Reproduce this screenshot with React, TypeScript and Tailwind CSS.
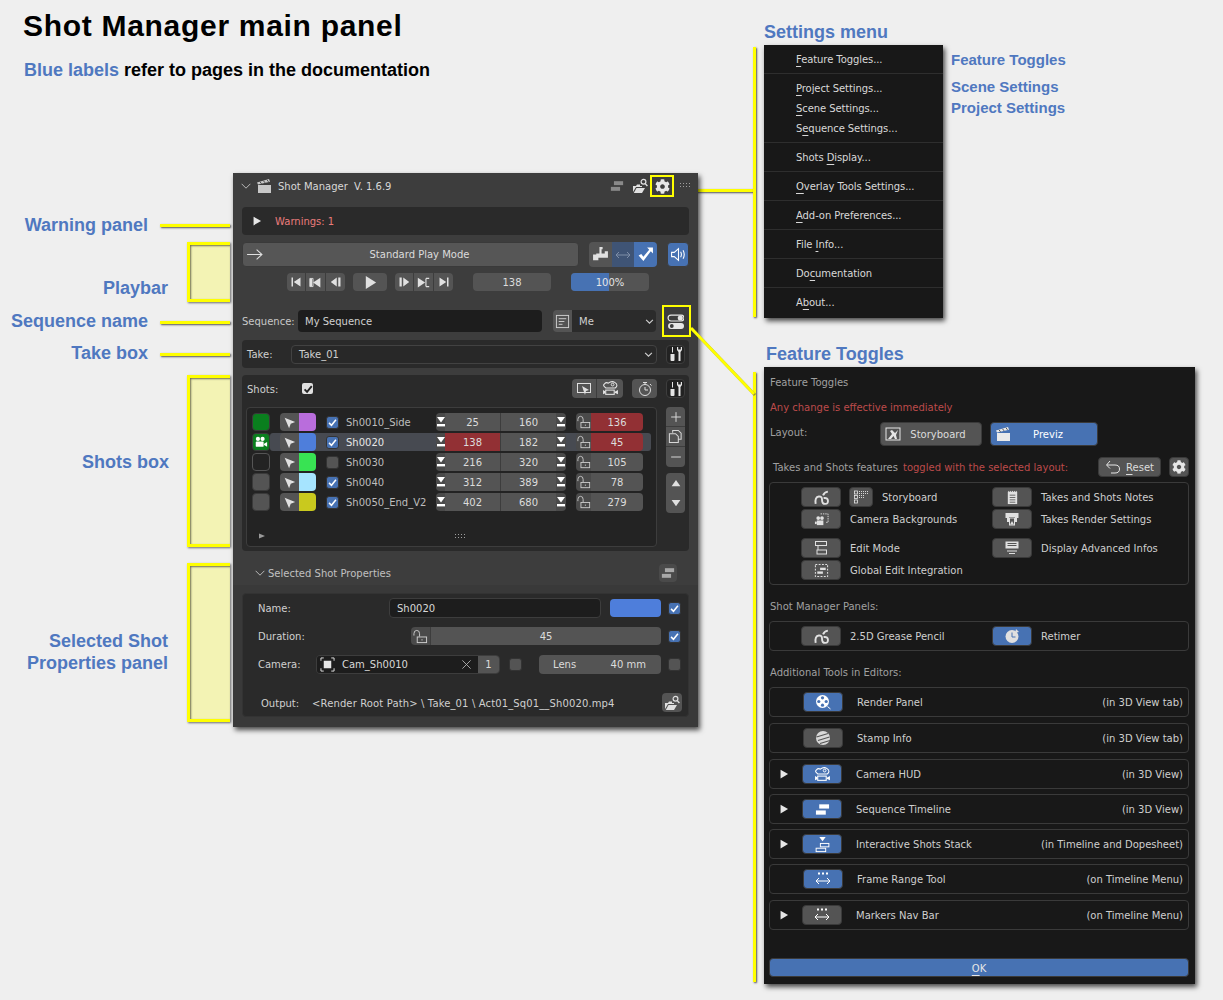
import React from "react";
import { FaCog } from "react-icons/fa";
import { twMerge } from "tailwind-merge";

type P = { className?: string; children?: React.ReactNode };
const UI = "[font-family:'DejaVu_Sans',sans-serif] text-[10px] leading-[14px]";

const T = ({ className = "", children }: P) => <span className={"relative top-[1px] " + className}>{children}</span>;

const Ico = ({ s = 16, w, h, className = "text-[#e0e0e0]", children, vb = "0 0 16 16" }: { s?: number; w?: number; h?: number; className?: string; children?: React.ReactNode; vb?: string }) => (
  <svg width={w ?? s} height={h ?? s} viewBox={vb} fill="currentColor" className={className + " shrink-0"}>
    {children}
  </svg>
);

const Chevron = () => (
  <Ico s={10} className="text-[#c0c0c0]"><path d="M1 4.5 L8 11.5 L15 4.5" fill="none" stroke="currentColor" strokeWidth="1.5" /></Ico>
);
const Caret = ({ className = "text-[#e6e6e6]" }: P) => (
  <Ico s={10} className={className}><path d="M2.5 1 L14.5 8 L2.5 15 Z" /></Ico>
);
const Drop = ({ className = "" }: P) => (
  <Ico s={9} className={"text-[#d0d0d0] " + className}><path d="M2 5 L8 11 L14 5" fill="none" stroke="currentColor" strokeWidth="2" /></Ico>
);
const Clapper = ({ s = 16, className = "text-[#c8c8c8]" }: { s?: number; className?: string }) => (
  <Ico s={s} className={className}>
    <path d="M2 7 H15 V15 H2 Z" />
    <path d="M1 4.5 L13 1 L14 3.8 L2 6.6 Z" />
    <path d="M4 3.8 L5.5 5.8 M7.5 2.8 L9 4.8 M11 1.8 L12.5 3.8" stroke="#3d3d3d" strokeWidth="0.9" />
  </Ico>
);
const Bars = ({ s = 14, className = "text-[#8a8a8a]" }: { s?: number; className?: string }) => (
  <Ico s={s} className={className}>
    <rect x="4.5" y="2.5" width="10.5" height="4.5" />
    <rect x="1" y="9" width="10.5" height="4.5" />
  </Ico>
);
const FolderSearch = ({ s = 16 }: { s?: number }) => (
  <Ico s={s}>
    <path d="M1 8 H4 L5 6.5 H8 V8 H10 V9 H4 L1 14 Z" />
    <path d="M4.5 10 H13 L10 15 H1.8 Z" />
    <circle cx="11.5" cy="3.8" r="2.4" fill="none" stroke="currentColor" strokeWidth="1.2" />
    <path d="M13.2 5.6 L15.4 8" stroke="currentColor" strokeWidth="1.4" />
  </Ico>
);
const Grip = () => (
  <svg width="12" height="6" viewBox="0 0 12 6" className="shrink-0 text-[#a0a0a0]" fill="currentColor">
    {[0, 3, 6, 9].map((x) => (
      <g key={x}>
        <rect x={x} y="0" width="1" height="1" />
        <rect x={x} y="3" width="1" height="1" />
      </g>
    ))}
  </svg>
);
const Tools = () => (
  <Ico s={16} className="text-[#e6e6e6]">
    <path d="M4 1 H5 V6.5 H4 Z" />
    <path d="M2.5 8 H6.5 V14 Q6.5 15 5.5 15 H3.5 Q2.5 15 2.5 14 Z" />
    <path d="M9 1 V4 L10.5 6 V15 H12.5 V6 L14 4 V1 L12.8 1 V3.6 H10.2 V1 Z" />
  </Ico>
);
const Tick = ({ s = 13 }: { s?: number }) => (
  <Ico s={s} className="text-white"><path d="M3 8.5 L6.5 12 L13 4" fill="none" stroke="currentColor" strokeWidth="2.2" /></Ico>
);
const Check = ({ on = true, className = "" }: { on?: boolean; className?: string }) => (
  <div className={twMerge("w-[13px] h-[13px] rounded-[3px] flex items-center justify-center shrink-0 border border-[#333]", on ? "bg-[#4772b3]" : "bg-[#545454]", className)}>
    {on && <Tick s={11} />}
  </div>
);
const Cursor = () => (
  <Ico s={13} className="text-[#e0e0e0]"><path d="M2 2 L15 7.5 L9.5 9.5 L7.5 15 Z" /></Ico>
);
const Lock = ({ s = 15 }: { s?: number }) => (
  <Ico s={s} className="text-[#cfcfcf]">
    <path d="M1 7 V5 Q1 1.5 4 1.5 Q7 1.5 7 5 V8" fill="none" stroke="currentColor" strokeWidth="1" />
    <rect x="4.5" y="8.5" width="10" height="6" fill="none" stroke="currentColor" strokeWidth="1" />
    <rect x="9" y="11" width="1.2" height="1.2" />
  </Ico>
);
const SetDown = () => (
  <Ico w={8} h={12} vb="0 0 8 12" className="text-white">
    <path d="M0 1 H8 L4 6.5 Z" />
    <rect x="0" y="8" width="8" height="2.4" />
  </Ico>
);
const CameraSolid = ({ s = 14, className = "text-white" }: { s?: number; className?: string }) => (
  <Ico s={s} className={className}>
    <circle cx="4.5" cy="4.5" r="2.4" />
    <circle cx="9.8" cy="4.5" r="2.4" />
    <rect x="2" y="7.5" width="9" height="6" rx="1" />
    <path d="M11.5 10 L15 8 V13.5 L11.5 11.5 Z" />
  </Ico>
);
const CameraHud = ({ s = 16, className = "text-[#e6e6e6]" }: { s?: number; className?: string }) => (
  <Ico s={s} className={className}>
    <path d="M2.5 6.5 Q0.5 5 2.5 3.5 Q4 1.8 6 3 Q9 0.5 12 2.2 Q15 4 13.5 6.5 L12.5 7.5 H3.5 Z" fill="none" stroke="currentColor" strokeWidth="1" />
    <circle cx="10" cy="4.3" r="1.3" fill="none" stroke="currentColor" strokeWidth="0.9" />
    <rect x="3.5" y="9.5" width="8" height="4" fill="none" stroke="currentColor" strokeWidth="1" />
    <path d="M1 9.5 L3 10.5 V12.5 L1 13.5 Z M12 11 L15 9.5 V13.5 L12 12 Z" />
  </Ico>
);
const Squiggle = () => (
  <Ico s={17}>
    <path d="M2.5 14 Q1.5 7.5 5.5 7 Q8.5 6.8 8.5 10 Q8.5 14 11.5 14 Q14.5 14 14 10.5 Q13.5 8 10 8.5 M9.5 6 Q10.5 3 14 2.5" fill="none" stroke="currentColor" strokeWidth="1.8" />
  </Ico>
);
const Gear = ({ s = 15, className = "text-[#e6e6e6]" }: { s?: number; className?: string }) => <FaCog size={s} className={className + " shrink-0"} />;

const wrap = (c: React.ReactNode) => (typeof c === "string" ? <T>{c}</T> : c);
const W = ({ className = "", children }: P) => (
  <div className={twMerge("flex items-center justify-center rounded-[4px] bg-[#545454] border border-[#3a3a3a] shrink-0 text-[#dcdcdc]", className)}>{wrap(children)}</div>
);
const Seg = ({ className = "", children }: P) => (
  <div className={twMerge("flex items-center justify-center bg-[#545454] shrink-0 text-[#dcdcdc]", className)}>{wrap(children)}</div>
);

const tri = (d: string) => <path d={d} />;
const Transport = {
  a: <Ico s={12}>{tri("M2 2 H4 V14 H2 Z M14 2 V14 L5 8 Z")}</Ico>,
  b: <Ico s={13}><path d="M1 3 H5 V13 H1 Z" fill="none" stroke="currentColor" strokeWidth="1" /><path d="M5 8 L14 2 V14 Z" /><path d="M1 3 H4 V13 H1 Z" /></Ico>,
  c: <Ico s={12}>{tri("M9 2 V14 L1 8 Z M11 2 H14 V14 H11 Z")}</Ico>,
  play: <Ico s={15}>{tri("M3 1 L14 8 L3 15 Z")}</Ico>,
  d: <Ico s={12}>{tri("M2 2 H5 V14 H2 Z M7 2 L15 8 L7 14 Z")}</Ico>,
  e: <Ico s={13}><path d="M1 2 L10 8 L1 14 Z" /><path d="M11 3 H15 M11 13 H15 M11 3 V13" fill="none" stroke="currentColor" strokeWidth="1.4" /></Ico>,
  f: <Ico s={12}>{tri("M2 2 L11 8 L2 14 Z M12 2 H14 V14 H12 Z")}</Ico>,
};

const ROWS = [
  { c: "bg-[#0a7f1e]", cam: false, sw: "bg-[#b96ddc]", on: true, name: "Sh0010_Side", a: "25", b: "160", d: "136", ra: false, rd: true },
  { c: "bg-[#0a7f1e]", cam: true, sw: "bg-[#4e7edb]", on: true, name: "Sh0020", a: "138", b: "182", d: "45", ra: true, rd: true, sel: true },
  { c: "bg-[#232323] border-[#555555]", cam: false, sw: "bg-[#38e353]", on: false, name: "Sh0030", a: "216", b: "320", d: "105", ra: false, rd: false },
  { c: "bg-[#545454]", cam: false, sw: "bg-[#a6e4ff]", on: true, name: "Sh0040", a: "312", b: "389", d: "78", ra: false, rd: false },
  { c: "bg-[#545454]", cam: false, sw: "bg-[#c9c91e]", on: true, name: "Sh0050_End_V2", a: "402", b: "680", d: "279", ra: false, rd: false },
];

const ShotRow = ({ r }: { r: (typeof ROWS)[number] }) => (
  <div className="relative flex items-center h-[18px]">
    {r.sel && <div className="absolute left-[18px] top-0 h-[18px] w-[381px] bg-[#474a51] rounded-[3px]" />}
    <W className={"relative w-[18px] h-[18px] " + r.c}>{r.cam && <CameraSolid s={14} />}</W>
    <div className="relative ml-[10px] flex w-[36px] h-[18px] rounded-[4px] overflow-hidden shrink-0">
      <Seg className="w-[19px]"><Cursor /></Seg>
      <div className={"w-[17px] " + r.sw} />
    </div>
    <Check on={r.on} className="relative ml-[10px]" />
    <div className={"relative ml-[7px] w-[90px] shrink-0 whitespace-nowrap " + (r.sel ? "text-[#e8e8e8]" : "text-[#bdbdbd]")}><T>{r.name}</T></div>
    <div className="relative flex h-[18px] w-[130px] rounded-[4px] overflow-hidden shrink-0">
      <Seg className="w-[9px] bg-[#4a4a4a]"><SetDown /></Seg>
      <Seg className={r.ra ? "w-[55px] bg-[#923034]" : "w-[55px]"}>{r.a}</Seg>
      <Seg className="w-[1px] bg-[#3d3d3d]" />
      <Seg className="w-[55px]">{r.b}</Seg>
      <Seg className="w-[10px] bg-[#4a4a4a]"><SetDown /></Seg>
    </div>
    <div className="relative ml-[10px] flex h-[18px] w-[67px] rounded-[4px] overflow-hidden shrink-0">
      <Seg className="w-[15px] bg-[#4a4a4a]"><Lock s={14} /></Seg>
      <Seg className={r.rd ? "w-[52px] bg-[#923034]" : "w-[52px]"}>{r.d}</Seg>
    </div>
  </div>
);

const MainPanel = () => (
  <div className={"absolute left-[233px] top-[173px] w-[465px] h-[554px] bg-[#3d3d3d] shadow-[2px_3px_5px_rgba(0,0,0,0.7)] text-[#d0d0d0] flex flex-col " + UI}>
    <div className="flex items-center h-[26px] pl-[8px] shrink-0">
      <Chevron />
      <div className="ml-[5px]"><Clapper /></div>
      <T className="ml-[6px] text-[#d8d8d8] whitespace-pre">Shot Manager  V. 1.6.9</T>
      <div className="ml-auto flex items-center pr-[6px]">
        <Bars />
        <div className="ml-[8px]"><FolderSearch /></div>
        <div className="ml-[6px] w-[16px] flex justify-center"><Gear s={15} /></div>
        <div className="ml-[10px]"><Grip /></div>
      </div>
    </div>

    <div className="mt-[8px] ml-[9px] w-[447px] h-[28px] rounded-[4px] bg-[#2a2a2a] flex items-center pl-[10px] shrink-0">
      <Caret />
      <T className="ml-[13px] text-[#ea7c7c]">Warnings: 1</T>
    </div>

    <div className="mt-[7px] ml-[9px] flex h-[25px] shrink-0">
      <W className="relative w-[337px] h-[25px] bg-[#565656]">
        <div className="absolute left-[3px]">
          <Ico s={17} className="text-[#e0e0e0]"><path d="M1 8 H15 M10 3.5 L15 8 L10 12.5" fill="none" stroke="currentColor" strokeWidth="1" /></Ico>
        </div>
        <span className="ml-[18px]">Standard Play Mode</span>
      </W>
      <div className="ml-[10px] flex h-[25px] w-[68px] rounded-[4px] overflow-hidden">
        <Seg className="w-[23px]">
          <Ico s={17}>
            <path d="M7 1 H10 V3 H9 V7 H12 V5 H15 V11 H6 V13.5 H1 V8 H4 V7 H7 Z" />
          </Ico>
        </Seg>
        <Seg className="w-[22px] bg-[#3f5475]">
          <Ico s={16} className="text-[#7e8ea8]"><path d="M1 8 H15 M4 5 L1 8 L4 11 M12 5 L15 8 L12 11" fill="none" stroke="currentColor" strokeWidth="1" /></Ico>
        </Seg>
        <Seg className="w-[23px] bg-[#4772b3]">
          <Ico s={17} className="text-white"><path d="M1.5 9 L6 14 L13 5 L15 7 V1.5 H9.5 L11.5 3.5 L6 10 L4 7.5 Z" /></Ico>
        </Seg>
      </div>
      <W className="ml-[10px] w-[22px] h-[25px] bg-[#4772b3] border-[#3d3d3d]">
        <Ico s={17} className="text-white">
          <path d="M1.5 6 H4 L8 2.5 V13.5 L4 10 H1.5 Z M10 5.5 Q11.5 8 10 10.5 M12.3 4 Q14.5 8 12.3 12" fill="none" stroke="currentColor" strokeWidth="1" />
        </Ico>
      </W>
    </div>

    <div className="mt-[6px] flex h-[18px] shrink-0 ml-[54px]">
      <div className="flex w-[58px] rounded-[4px] overflow-hidden">
        <Seg className="w-[19px] border-r border-[#3d3d3d]">{Transport.a}</Seg>
        <Seg className="w-[20px] border-r border-[#3d3d3d]">{Transport.b}</Seg>
        <Seg className="w-[19px]">{Transport.c}</Seg>
      </div>
      <W className="ml-[8px] w-[34px] border-0">{Transport.play}</W>
      <div className="ml-[8px] flex w-[58px] rounded-[4px] overflow-hidden">
        <Seg className="w-[19px] border-r border-[#3d3d3d]">{Transport.d}</Seg>
        <Seg className="w-[20px] border-r border-[#3d3d3d]">{Transport.e}</Seg>
        <Seg className="w-[19px]">{Transport.f}</Seg>
      </div>
      <W className="ml-[20px] w-[78px] border-0">138</W>
      <div className="relative ml-[20px] w-[78px] h-[18px] rounded-[4px] overflow-hidden bg-[#545454] flex items-center justify-center text-[#e6e6e6]">
        <div className="absolute left-0 top-0 h-full w-[38px] bg-[#4772b3]" />
        <T>100%</T>
      </div>
    </div>

    <div className="mt-[19px] ml-[9px] flex items-center h-[22px] shrink-0">
      <T className="w-[56px] text-[#c8c8c8]">Sequence:</T>
      <div className="w-[244px] h-[22px] rounded-[4px] bg-[#1d1d1d] flex items-center pl-[7px] text-[#d0d0d0]"><T>My Sequence</T></div>
      <div className="ml-[11px] flex w-[103px] h-[22px] rounded-[4px] overflow-hidden">
        <Seg className="w-[19px]">
          <Ico s={15} className="text-[#d0d0d0]"><rect x="1.5" y="1.5" width="13" height="13" fill="none" stroke="currentColor" strokeWidth="1" /><path d="M4 5 H12 M4 8 H10 M4 11 H8" stroke="currentColor" strokeWidth="1" /></Ico>
        </Seg>
        <div className="flex-1 bg-[#2b2b2b] flex items-center pl-[7px] pr-[2px] justify-between"><T>Me</T><Drop /></div>
      </div>
      <div className="ml-[7px] w-[24px] flex justify-center">
        <Ico s={17} className="text-[#e6e6e6]">
          <rect x="1" y="2" width="15" height="5.5" rx="2.75" fill="none" stroke="currentColor" strokeWidth="1.1" />
          <circle cx="12.5" cy="4.75" r="2.4" />
          <rect x="1" y="9.5" width="15" height="5.5" rx="2.75" />
          <circle cx="4.5" cy="12.25" r="1.8" fill="#3d3d3d" />
        </Ico>
      </div>
    </div>

    <div className="mt-[8px] ml-[9px] w-[447px] h-[28px] rounded-[4px] bg-[#2a2a2a] flex items-center pl-[5px] shrink-0">
      <T className="w-[44px]">Take:</T>
      <div className="w-[366px] h-[19px] rounded-[4px] bg-[#282828] border border-[#424242] flex items-center pl-[7px] pr-[3px] justify-between"><T>Take_01</T><Drop /></div>
      <div className="ml-[9px] w-[19px] h-[19px] rounded-[4px] bg-[#222] border border-[#3d3d3d] flex items-center justify-center"><Tools /></div>
    </div>

    <div className="mt-[7px] ml-[9px] w-[447px] h-[176px] rounded-[4px] bg-[#2a2a2a] flex flex-col shrink-0">
      <div className="mt-[4px] flex items-center h-[19px] pl-[5px]">
        <T className="w-[55px]">Shots:</T>
        <div className="w-[11px] h-[11px] rounded-[2px] bg-[#e0e0e0] flex items-center justify-center">
          <Ico s={10} className="text-[#222]"><path d="M2.5 8.5 L6.5 12.5 L14 3.5" fill="none" stroke="currentColor" strokeWidth="3" /></Ico>
        </div>
        <div className="ml-[259px] flex w-[51px] h-[19px] rounded-[4px] overflow-hidden">
          <Seg className="w-[25px] border-r border-[#3d3d3d]">
            <Ico s={16}><rect x="1.5" y="2.5" width="13" height="9" fill="none" stroke="currentColor" strokeWidth="1" /><path d="M6 5 L13 9 L10 10 L9 14 Z" /></Ico>
          </Seg>
          <Seg className="w-[26px]"><CameraHud s={17} /></Seg>
        </div>
        <W className="ml-[9px] w-[25px] h-[19px] border-0">
          <Ico s={16}><circle cx="8" cy="9" r="5.5" fill="none" stroke="currentColor" strokeWidth="1" /><path d="M6 1.5 H10 M8 2 V3.5 M8 6 V9 H11 M13 3 L14.5 4.5" fill="none" stroke="currentColor" strokeWidth="1" /></Ico>
        </W>
        <div className="ml-[9px] w-[19px] h-[19px] rounded-[4px] bg-[#222] border border-[#3d3d3d] flex items-center justify-center"><Tools /></div>
      </div>
      <div className="mt-[9px] ml-[4px] flex">
        <div className="w-[411px] h-[140px] rounded-[4px] bg-[#232323] border border-[#3d3d3d] flex flex-col relative shrink-0">
          <div className="pl-[5px] pt-[5px] flex flex-col gap-[2px]">
            {ROWS.map((r) => <ShotRow key={r.name} r={r} />)}
          </div>
          <div className="absolute left-[11px] bottom-[6px]"><Ico s={8} className="text-[#9a9a9a]"><path d="M2 3 L14 8 L2 13 Z" /></Ico></div>
          <div className="absolute left-[208px] bottom-[6px]"><Grip /></div>
        </div>
        <div className="ml-[9px] flex flex-col">
          <div className="w-[19px] h-[60px] rounded-[4px] overflow-hidden flex flex-col">
            <Seg className="h-[20px] border-b border-[#3d3d3d]"><Ico s={12} className="text-[#d8d8d8]"><path d="M8 1.5 V14.5 M1.5 8 H14.5" stroke="currentColor" strokeWidth="1.3" /></Ico></Seg>
            <Seg className="h-[20px] border-b border-[#3d3d3d]"><Ico s={15} className="text-[#d8d8d8]"><path d="M5 4 V1.5 H11 L14 4.5 V11 H11 M1.5 5 H8 L11 8 V14.5 H1.5 Z" fill="none" stroke="currentColor" strokeWidth="1.1" /></Ico></Seg>
            <Seg className="h-[20px]"><Ico s={12} className="text-[#d8d8d8]"><path d="M1.5 8 H14.5" stroke="currentColor" strokeWidth="1.3" /></Ico></Seg>
          </div>
          <div className="mt-[6px] w-[19px] h-[40px] rounded-[4px] overflow-hidden flex flex-col">
            <Seg className="h-[20px]"><Ico s={10} className="text-[#e0e0e0]"><path d="M8 3 L15 13 H1 Z" /></Ico></Seg>
            <Seg className="h-[20px]"><Ico s={10} className="text-[#e0e0e0]"><path d="M8 13 L15 3 H1 Z" /></Ico></Seg>
          </div>
        </div>
      </div>
    </div>

    <div className="mt-[9px] h-[25px] flex items-center pl-[22px] shrink-0">
      <Chevron />
      <T className="ml-[3px] w-[122px] whitespace-nowrap text-[#c0c0c0]">Selected Shot Properties</T>
      <W className="ml-[269px] w-[18px] h-[18px] bg-[#4a4a4a] border-0"><Bars s={14} className="text-[#a8a8a8]" /></W>
    </div>

    <div className="flex-1 bg-[#393939] pt-[8px] pl-[9px]">
      <div className="w-[447px] h-[124px] rounded-[4px] bg-[#2a2a2a] border border-[#333] flex flex-col">
        <div className="mt-[4px] flex items-center h-[20px] pl-[15px]">
          <T className="w-[131px]">Name:</T>
          <div className="w-[212px] h-[20px] rounded-[4px] bg-[#1d1d1d] border border-[#3d3d3d] flex items-center pl-[7px] text-[#d8d8d8]"><T>Sh0020</T></div>
          <div className="ml-[9px] w-[51px] h-[18px] rounded-[4px] bg-[#4e7edb]" />
          <Check className="ml-[7px]" />
        </div>
        <div className="mt-[9px] flex items-center h-[18px] pl-[15px]">
          <T className="w-[153px]">Duration:</T>
          <div className="flex w-[250px] h-[18px] rounded-[4px] overflow-hidden">
            <Seg className="w-[20px] bg-[#4a4a4a] border-r border-[#3d3d3d]"><Lock s={15} /></Seg>
            <Seg className="flex-1">45</Seg>
          </div>
          <Check className="ml-[7px]" />
        </div>
        <div className="mt-[10px] flex items-center h-[18px] pl-[15px]">
          <T className="w-[58px]">Camera:</T>
          <div className="flex w-[184px] h-[19px] rounded-[4px] overflow-hidden border border-[#3d3d3d]">
            <div className="w-[161px] bg-[#1d1d1d] flex items-center pl-[3px] text-[#d8d8d8]">
              <Ico s={15} className="text-[#e6e6e6]">
                <rect x="4" y="4" width="8" height="8" />
                <path d="M1 4 V1 H4 M12 1 H15 V4 M15 12 V15 H12 M4 15 H1 V12" fill="none" stroke="currentColor" strokeWidth="1" />
              </Ico>
              <T className="ml-[7px]">Cam_Sh0010</T>
              <div className="ml-auto mr-[6px]"><Ico s={11} className="text-[#bdbdbd]"><path d="M2 2 L14 14 M14 2 L2 14" stroke="currentColor" strokeWidth="1.2" /></Ico></div>
            </div>
            <Seg className="flex-1">1</Seg>
          </div>
          <Check on={false} className="ml-[9px]" />
          <div className="ml-[17px] w-[122px] h-[19px] rounded-[4px] bg-[#545454] flex items-center justify-between pl-[14px] pr-[15px] text-[#dcdcdc] shrink-0">
            <T>Lens</T>
            <T>40 mm</T>
          </div>
          <Check on={false} className="ml-[7px]" />
        </div>
        <div className="mt-[20px] flex items-center h-[19px] pl-[18px]">
          <T className="w-[51px]">Output:</T>
          <T className="text-[#d0d0d0] whitespace-nowrap tracking-[0.13px]">{"<Render Root Path> \\ Take_01 \\ Act01_Sq01__Sh0020.mp4"}</T>
          <W className="ml-auto mr-[6px] w-[20px] h-[19px] border-0"><FolderSearch s={16} /></W>
        </div>
      </div>
    </div>
  </div>
);

const MenuItem = ({ t }: { t: [string, string, string] }) => (
  <div className="h-[20px] pl-[32px] flex items-center text-[#d8d8d8] whitespace-pre tracking-[-0.08px]">
    <T>
      {t[0]}
      <span className="underline underline-offset-[3px] decoration-[#d8d8d8]">{t[1]}</span>
      {t[2]}
    </T>
  </div>
);
const MenuSep = () => (
  <div className="h-[9px] flex items-center"><div className="h-[1px] w-full bg-[#2e2e2e]" /></div>
);

const SettingsMenu = () => (
  <div className={"absolute left-[764px] top-[45px] w-[179px] h-[273px] bg-[#181818] pt-[4px] shadow-[2px_3px_5px_rgba(0,0,0,0.7)] " + UI}>
    <MenuItem t={["", "F", "eature Toggles..."]} />
    <MenuSep />
    <MenuItem t={["", "P", "roject Settings..."]} />
    <MenuItem t={["", "S", "cene Settings..."]} />
    <MenuItem t={["S", "e", "quence Settings..."]} />
    <MenuSep />
    <MenuItem t={["Shots ", "D", "isplay..."]} />
    <MenuSep />
    <MenuItem t={["", "O", "verlay Tools Settings..."]} />
    <MenuSep />
    <MenuItem t={["", "A", "dd-on Preferences..."]} />
    <MenuSep />
    <MenuItem t={["File ", "I", "nfo..."]} />
    <MenuSep />
    <MenuItem t={["Do", "c", "umentation"]} />
    <MenuSep />
    <MenuItem t={["A", "b", "out..."]} />
  </div>
);

const BLUE = "bg-[#4772b3]";
const Fbtn = ({ on = false, children, className = "w-[40px]" }: { on?: boolean; children?: React.ReactNode; className?: string }) => (
  <W className={twMerge("h-[20px]", className, on ? BLUE : "")}>{children}</W>
);

const FeatureCell = ({ icon, text, on = false, extra }: { icon: React.ReactNode; text: string; on?: boolean; extra?: React.ReactNode }) => (
  <div className="flex items-center h-[20px] w-[191px] shrink-0">
    <Fbtn on={on}>{icon}</Fbtn>
    {extra}
    <T className="ml-[9px] text-[#cfcfcf]">{text}</T>
  </div>
);

const ToolRow = ({ tri: hasTri, on, icon, text, right, className }: { tri?: boolean; on?: boolean; icon: React.ReactNode; text: string; right: string; className: string }) => (
  <div className={"h-[30px] rounded-[4px] border border-[#3a3a3a] flex items-center pr-[5px] shrink-0 " + className}>
    {hasTri ? (
      <>
        <div className="w-[32px] pl-[9px] flex items-center"><Caret /></div>
        <Fbtn on={on}>{icon}</Fbtn>
        <T className="ml-[14px] text-[#cfcfcf]">{text}</T>
      </>
    ) : (
      <>
        <div className="w-[33px]" />
        <Fbtn on={on}>{icon}</Fbtn>
        <T className="ml-[14px] text-[#cfcfcf]">{text}</T>
      </>
    )}
    <T className="ml-auto text-[#cfcfcf]">{right}</T>
  </div>
);

const Dots = () => (
  <Ico s={16} className="text-white">
    <rect x="3" y="1.5" width="2" height="2" /><rect x="7" y="1.5" width="2" height="2" /><rect x="11" y="1.5" width="2" height="2" />
    <path d="M1 10 H15 M4 7 L1 10 L4 13 M12 7 L15 10 L12 13" fill="none" stroke="currentColor" strokeWidth="1" />
  </Ico>
);

const FeatureToggles = () => (
  <div className={"absolute left-[764px] top-[367px] w-[431px] h-[617px] bg-[#181818] shadow-[2px_3px_5px_rgba(0,0,0,0.7)] pl-[5px] flex flex-col " + UI}>
    <div className="mt-[5px] h-[20px] flex items-center pl-[1px] text-[#a0a0a0] shrink-0"><T>Feature Toggles</T></div>
    <div className="mt-[5px] h-[20px] flex items-center pl-[1px] text-[#bd4b4b] shrink-0"><T>Any change is effective immediately</T></div>
    <div className="mt-[5px] h-[24px] flex shrink-0">
      <div className="w-[111px] pl-[1px] h-[20px] flex items-center text-[#a0a0a0]"><T>Layout:</T></div>
      <W className="relative w-[102px] h-[24px]">
        <div className="absolute left-[4px]">
          <Ico s={16} className="text-[#e6e6e6]"><rect x="1" y="2" width="14" height="12" fill="none" stroke="currentColor" strokeWidth="1" /><path d="M3 13 L7 8 L5 5 L7 4 L10 7 L13 4 L11 9 L12 13 H10 L8.5 10 L6 13 Z" /></Ico>
        </div>
        <T className="ml-[14px]">Storyboard</T>
      </W>
      <W className={"relative ml-[8px] w-[108px] h-[24px] text-white " + BLUE}>
        <div className="absolute left-[4px]"><Clapper className="text-[#eaeaea]" /></div>
        <T className="ml-[8px]">Previz</T>
      </W>
    </div>
    <div className="mt-[11px] h-[20px] flex items-center pl-[4px] shrink-0">
      <T className="text-[#a0a0a0] whitespace-pre">Takes and Shots features</T>
      <T className="ml-[5px] text-[#bd4b4b]">toggled with the selected layout:</T>
      <W className="absolute left-[334px] w-[63px] h-[20px]">
        <div><Ico s={16} className="text-[#e6e6e6]"><path d="M5 2 L1.5 6 L5 9.5 M2 6 H10 Q14.5 6 14.5 10 Q14.5 14 10 14 H6" fill="none" stroke="currentColor" strokeWidth="1" /></Ico></div>
        <T className="ml-[5px]">
          <span className="underline underline-offset-[3px]">R</span>eset
        </T>
      </W>
      <W className="absolute left-[405px] w-[20px] h-[20px]"><Gear s={14} /></W>
    </div>
    <div className="mt-[5px] w-[420px] h-[103px] rounded-[4px] border border-[#3a3a3a] flex flex-col pl-[31px] pt-[4px] shrink-0">
      <div className="flex">
        <FeatureCell
          icon={<Squiggle />}
          text="Storyboard"
          extra={
            <W className="ml-[8px] w-[24px] h-[20px]">
              <Ico s={16} className="text-[#e6e6e6]">
                <rect x="1.5" y="2" width="3" height="3" fill="none" stroke="currentColor" strokeWidth="0.8" />
                <rect x="1.5" y="6.5" width="3" height="3" fill="none" stroke="currentColor" strokeWidth="0.8" />
                <rect x="1.5" y="11" width="3" height="3" fill="none" stroke="currentColor" strokeWidth="0.8" />
                <path d="M6 2.5 H15 M6 4.5 H15 M6 6.5 H12 M6 8.5 H12" stroke="currentColor" strokeWidth="0.9" strokeDasharray="1 1" />
              </Ico>
            </W>
          }
        />
        <FeatureCell
          icon={
            <Ico s={15}>
              <rect x="3" y="2" width="10" height="13" />
              <path d="M4 1 V3 M6 1 V3 M8 1 V3 M10 1 V3 M12 1 V3" stroke="currentColor" />
              <path d="M5 5.5 H11 M5 8 H11 M5 10.5 H11 M5 13 H11" stroke="#545454" strokeWidth="0.9" />
            </Ico>
          }
          text="Takes and Shots Notes"
        />
      </div>
      <div className="flex mt-[2px]">
        <FeatureCell icon={<Ico s={15}><circle cx="4.5" cy="6.5" r="2" /><circle cx="8.5" cy="6.5" r="2" /><rect x="3" y="9" width="7" height="5" /><path d="M1 10 L3 10.5 V12.5 L1 13 Z" /><path d="M7 2 H15 V11 H12" fill="none" stroke="currentColor" strokeWidth="1" strokeDasharray="1.5 1" /></Ico>} text="Camera Backgrounds" />
        <FeatureCell icon={<Ico s={16}><path d="M1.5 2 H14.5 V7 H13 V11 H11 V6 H5 V11 H3 V7 H1.5 Z" /><rect x="5.5" y="7" width="5" height="7" fill="none" stroke="currentColor" strokeWidth="1" /><path d="M6 13.5 L8 10 L10 13.5 Z" /></Ico>} text="Takes Render Settings" />
      </div>
      <div className="flex mt-[9px]">
        <FeatureCell icon={<Ico s={16}><rect x="2.5" y="1.5" width="11" height="4" fill="none" stroke="currentColor" strokeWidth="1" /><path d="M5 5.5 V10" stroke="currentColor" strokeWidth="1" /><rect x="4" y="10" width="9.5" height="4" fill="none" stroke="currentColor" strokeWidth="1" /></Ico>} text="Edit Mode" />
        <FeatureCell icon={<Ico s={16}><rect x="1.5" y="1.5" width="13" height="7" /><path d="M3.5 3.5 H12.5 M3.5 5.5 H12.5" stroke="#545454" strokeWidth="1" /><path d="M3 11 H13 M5 13.5 H11" stroke="currentColor" strokeWidth="1" /></Ico>} text="Display Advanced Infos" />
      </div>
      <div className="flex mt-[2px]">
        <FeatureCell icon={<Ico s={15}><rect x="1.5" y="1.5" width="13" height="13" fill="none" stroke="currentColor" strokeWidth="1.1" strokeDasharray="2 1.5" /><rect x="6.5" y="5" width="6" height="2.5" /><rect x="3.5" y="9" width="6" height="2.5" /></Ico>} text="Global Edit Integration" />
      </div>
    </div>
    <div className="mt-[11px] h-[20px] flex items-center pl-[1px] text-[#a0a0a0] shrink-0"><T>Shot Manager Panels:</T></div>
    <div className="mt-[5px] w-[420px] h-[30px] rounded-[4px] border border-[#3a3a3a] flex items-center pl-[31px] shrink-0">
      <FeatureCell icon={<Squiggle />} text="2.5D Grease Pencil" />
      <FeatureCell on icon={<Ico s={16}><circle cx="8" cy="8.5" r="6.5" /><path d="M8 4.5 V9 H11.5" fill="none" stroke="#4772b3" strokeWidth="1" /><path d="M12 1 L15 4 L11 5 Z" /></Ico>} text="Retimer" />
    </div>
    <div className="mt-[11px] h-[20px] flex items-center pl-[1px] text-[#a0a0a0] shrink-0"><T>Additional Tools in Editors:</T></div>
    <div className="w-[420px] flex flex-col">
      <ToolRow
        className="mt-[5px]"
        on
        icon={<Ico s={16} className="text-white"><circle cx="7.5" cy="7.5" r="6.5" /><g fill="#4772b3"><circle cx="7.5" cy="3.8" r="1.6" /><circle cx="7.5" cy="11.2" r="1.6" /><circle cx="3.8" cy="7.5" r="1.6" /><circle cx="11.2" cy="7.5" r="1.6" /></g><path d="M12.5 12.5 L15.5 15" stroke="currentColor" strokeWidth="1" /></Ico>}
        text="Render Panel"
        right="(in 3D View tab)"
      />
      <ToolRow
        className="mt-[6px]"
        icon={<Ico s={16} className="text-[#d8d8d8]"><circle cx="8" cy="8" r="7" /><path d="M1.5 7 L13 3.5 M3 10.5 L14.5 7 M5 13.5 L15 10.5" stroke="#545454" strokeWidth="1.1" /></Ico>}
        text="Stamp Info"
        right="(in 3D View tab)"
      />
      <ToolRow className="mt-[6px]" tri on icon={<CameraHud s={17} className="text-white" />} text="Camera HUD" right="(in 3D View)" />
      <ToolRow className="mt-[5px]" tri on icon={<Bars s={15} className="text-white" />} text="Sequence Timeline" right="(in 3D View)" />
      <ToolRow
        className="mt-[5px]"
        tri
        on
        icon={<Ico s={17} className="text-white"><path d="M5 1 H11 L8 5 Z" /><rect x="6" y="7" width="8" height="3.2" fill="none" stroke="currentColor" strokeWidth="0.9" /><rect x="2" y="11.5" width="9" height="3.2" fill="none" stroke="currentColor" strokeWidth="0.9" /></Ico>}
        text="Interactive Shots Stack"
        right="(in Timeline and Dopesheet)"
      />
      <ToolRow className="mt-[5px]" on icon={<Dots />} text="Frame Range Tool" right="(on Timeline Menu)" />
      <ToolRow className="mt-[6px]" tri icon={<Dots />} text="Markers Nav Bar" right="(on Timeline Menu)" />
    </div>
    <div className={"mt-[28px] w-[420px] h-[19px] rounded-[4px] border border-[#3a3a3a] flex items-center justify-center text-[#e6e6e6] shrink-0 " + BLUE}>
      <T>
        <span className="underline underline-offset-[3px] decoration-[#e6e6e6]">O</span>K
      </T>
    </div>
  </div>
);

const Label = ({ className = "", children }: P) => (
  <div className={twMerge("absolute text-[#4f78c0] font-bold whitespace-nowrap", className)}>{children}</div>
);
const LINE = "absolute bg-[#ffff00] shadow-[1px_1px_2px_rgba(0,0,0,0.65)]";
const BRACKET = "absolute bg-[#f3f3b4] border-[3px] border-r-0 border-[#ffff00] left-[187px] w-[43px] shadow-[1px_1px_2px_rgba(0,0,0,0.55),inset_1px_1px_2px_rgba(0,0,0,0.55)]";

export default function App() {
  return (
    <div className="relative w-[1223px] h-[1000px] overflow-hidden bg-[#efefef] [font-family:'Liberation_Sans',Arial,sans-serif]">
      <div className="absolute left-[23px] top-[9px] text-[30px] leading-[34px] font-bold text-black tracking-[0.7px] whitespace-nowrap">Shot Manager main panel</div>
      <div className="absolute left-[24px] top-[60px] text-[18px] leading-[20px] font-bold text-black whitespace-nowrap">
        <span className="text-[#4f78c0]">Blue labels</span> refer to pages in the documentation
      </div>

      <Label className="right-[1075px] top-[216px] text-[18px] leading-[18px]">Warning panel</Label>
      <Label className="right-[1055px] top-[279px] text-[18px] leading-[18px]">Playbar</Label>
      <Label className="right-[1075px] top-[312px] text-[18px] leading-[18px]">Sequence name</Label>
      <Label className="right-[1075px] top-[344px] text-[18px] leading-[18px]">Take box</Label>
      <Label className="right-[1054px] top-[453px] text-[18px] leading-[18px]">Shots box</Label>
      <Label className="right-[1055px] top-[630px] text-[18px] leading-[22px] text-right">
        Selected Shot
        <br />
        Properties panel
      </Label>

      <div className={LINE + " left-[160px] top-[224px] w-[70px] h-[3px]"} />
      <div className={LINE + " left-[160px] top-[321px] w-[70px] h-[3px]"} />
      <div className={LINE + " left-[160px] top-[353px] w-[70px] h-[3px]"} />
      <div className={BRACKET + " top-[242px] h-[60px]"} />
      <div className={BRACKET + " top-[375px] h-[172px]"} />
      <div className={BRACKET + " top-[563px] h-[159px]"} />

      <div className={LINE + " left-[673px] top-[189px] w-[81px] h-[3px]"} />
      <div className={LINE + " left-[753px] top-[47px] w-[3px] h-[270px]"} />
      <div className={LINE + " left-[753px] top-[372px] w-[3px] h-[610px]"} />

      <MainPanel />

      <div className="absolute left-[650px] top-[175px] w-[24px] h-[22px] border-[2px] border-[#ffff00]" />
      <div className="absolute left-[662px] top-[305px] w-[29px] h-[32px] border-[2px] border-[#ffff00]" />
      <svg className="absolute left-[685px] top-[320px]" width="75" height="80" viewBox="0 0 75 80">
        <line x1="6" y1="8" x2="69" y2="74" stroke="#555" strokeWidth="3" transform="translate(1 1)" opacity="0.6" />
        <line x1="6" y1="8" x2="69" y2="74" stroke="#ffff00" strokeWidth="3" />
      </svg>

      <Label className="left-[764px] top-[23px] text-[18px] leading-[18px]">Settings menu</Label>
      <Label className="left-[951px] top-[52px] text-[15px] leading-[15px]">Feature Toggles</Label>
      <Label className="left-[951px] top-[79px] text-[15px] leading-[15px]">Scene Settings</Label>
      <Label className="left-[951px] top-[100px] text-[15px] leading-[15px]">Project Settings</Label>
      <Label className="left-[766px] top-[345px] text-[18px] leading-[18px]">Feature Toggles</Label>

      <SettingsMenu />
      <FeatureToggles />
    </div>
  );
}
